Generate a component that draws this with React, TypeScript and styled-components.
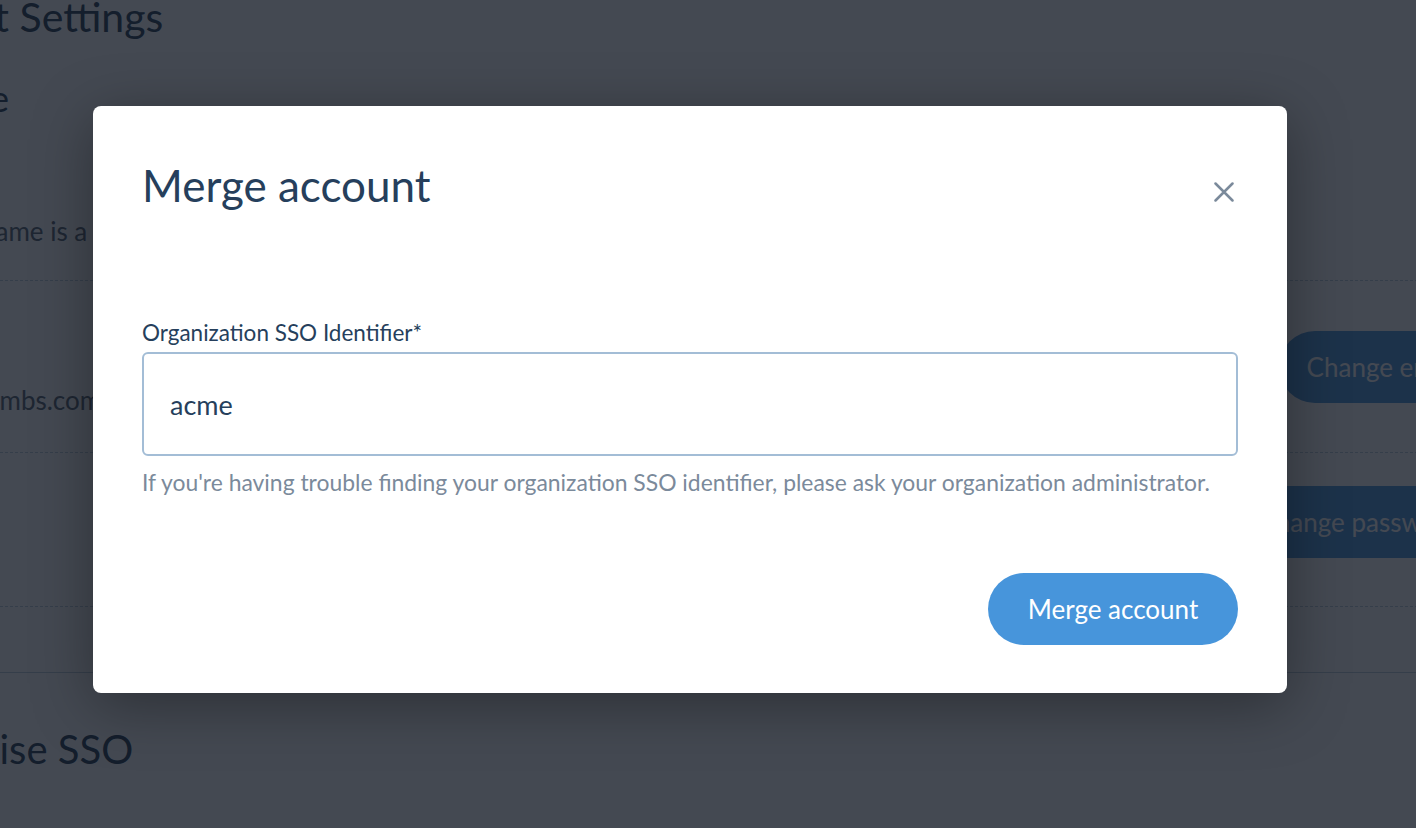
import React from "react";
import styled, { createGlobalStyle } from "styled-components";

const Global = createGlobalStyle`
  html, body { margin: 0; padding: 0; }
  body {
    font-family: "Source Sans Pro", "Lato", "Open Sans", sans-serif;
    background: #ffffff;
    overflow: hidden;
  }
  * { box-sizing: border-box; }
`;

const Viewport = styled.div`
  position: relative;
  width: 1416px;
  height: 828px;
  overflow: hidden;
  background: #ffffff;
`;

const Settings = styled.div`
  margin-left: -140px;
  width: 1628px;
  color: #243b53;
`;

const PageTitle = styled.h1`
  margin: -7px 0 0 0;
  font-size: 41px;
  line-height: 48px;
  font-weight: 400;
  white-space: nowrap;
`;

const SectionTitle = styled.h2<{ $top: number; $size: number; $indent?: number }>`
  margin: ${(p) => p.$top}px 0 0 ${(p) => p.$indent ?? 0}px;
  font-size: ${(p) => p.$size}px;
  line-height: 44px;
  font-weight: 400;
  white-space: nowrap;
`;

const Description = styled.p`
  margin: 96px 0 0 0;
  text-indent: -22px;
  font-size: 26px;
  line-height: 30px;
  color: #52606d;
  padding-bottom: 34px;
  border-bottom: 1px dashed #bcccdc;
  white-space: nowrap;
`;

const Row = styled.div<{ $h: number; $solid?: boolean; $padBottom?: number }>`
  display: flex;
  align-items: center;
  justify-content: space-between;
  height: ${(p) => p.$h}px;
  padding-bottom: ${(p) => p.$padBottom ?? 0}px;
  border-bottom: 1px ${(p) => (p.$solid ? "solid" : "dashed")} #bcccdc;
`;

const RowText = styled.div<{ $indent?: number }>`
  margin-left: ${(p) => p.$indent ?? 0}px;
  font-size: 26px;
  line-height: 30px;
  color: #52606d;
  padding-top: 67px;
  white-space: nowrap;
`;

const PageButton = styled.button`
  height: 72px;
  padding: 0 28px;
  border: none;
  border-radius: 36px;
  background: #4a95db;
  color: #ffffff;
  font-family: inherit;
  font-size: 26px;
  white-space: nowrap;
`;

const Spacer = styled.div`
  height: 66px;
  border-bottom: 1px solid #bcccdc;
`;

const SmallText = styled.p`
  margin: 54px 0 0 0;
  font-size: 26px;
  line-height: 30px;
  color: #52606d;
  white-space: nowrap;
`;

const Overlay = styled.div`
  position: absolute;
  inset: 0;
  background: rgba(16, 22, 33, 0.78);
  padding: 106px 0 0 93px;
`;

const Modal = styled.div`
  width: 1194px;
  background: #ffffff;
  border-radius: 8px;
  padding: 53px 49px 48px 49px;
  box-shadow: 0 12px 60px rgba(0, 0, 0, 0.35);
  display: flex;
  flex-direction: column;
`;

const Header = styled.div`
  display: flex;
  align-items: center;
  justify-content: space-between;
  height: 52px;
`;

const Title = styled.h2`
  margin: 0;
  font-size: 44px;
  line-height: 52px;
  font-weight: 400;
  color: #263f5c;
`;

const CloseButton = styled.button`
  width: 28px;
  height: 28px;
  margin: 14px 0 0 0;
  padding: 0;
  border: none;
  background: none;
  display: flex;
  align-items: center;
  justify-content: center;
  color: #7b8a9b;
`;

const Label = styled.label`
  margin-top: 109px;
  font-size: 22.5px;
  line-height: 26px;
  color: #263f5c;
`;

const Input = styled.input`
  margin-top: 6px;
  height: 104px;
  width: 100%;
  border: 2px solid #a3bdd6;
  border-radius: 6px;
  padding: 0 26px;
  font-family: inherit;
  font-size: 27px;
  color: #263f5c;
  outline: none;
`;

const Help = styled.p`
  margin: 12px 0 0 0;
  font-size: 22.9px;
  line-height: 28px;
  color: #7b8a9b;
  white-space: nowrap;
`;

const Footer = styled.div`
  margin-top: 77px;
  display: flex;
  justify-content: flex-end;
`;

const PrimaryButton = styled.button`
  width: 250px;
  height: 72px;
  border: none;
  border-radius: 36px;
  background: #4795db;
  color: #ffffff;
  font-family: inherit;
  font-size: 26px;
`;

export default function App() {
  return (
    <Viewport>
      <Global />
      <Settings>
        <PageTitle>Account Settings</PageTitle>
        <SectionTitle $top={35} $size={36} $indent={-11}>Username</SectionTitle>
        <Description>Your display name is a public identifier across the app.</Description>
        <Row $h={172}>
          <RowText $indent={-56}>owner@breadcrumbs.com</RowText>
          <PageButton>Change email</PageButton>
        </Row>
        <Row $h={154} $padBottom={16}>
          <RowText>Password</RowText>
          <PageButton>Change password</PageButton>
        </Row>
        <Spacer />
        <SectionTitle $top={54} $size={40} $indent={8}>Enterprise SSO</SectionTitle>
        <SmallText>Merge your account into your organization</SmallText>
      </Settings>
      <Overlay>
        <Modal>
          <Header>
            <Title>Merge account</Title>
            <CloseButton aria-label="Close">
              <svg width="20" height="20" viewBox="0 0 20 20">
                <path d="M1.5 1.5 L18.5 18.5 M18.5 1.5 L1.5 18.5" stroke="currentColor" strokeWidth="2.5" strokeLinecap="round" />
              </svg>
            </CloseButton>
          </Header>
          <Label>Organization SSO Identifier*</Label>
          <Input defaultValue="acme" />
          <Help>
            If you're having trouble finding your organization SSO identifier, please ask your organization administrator.
          </Help>
          <Footer>
            <PrimaryButton>Merge account</PrimaryButton>
          </Footer>
        </Modal>
      </Overlay>
    </Viewport>
  );
}
